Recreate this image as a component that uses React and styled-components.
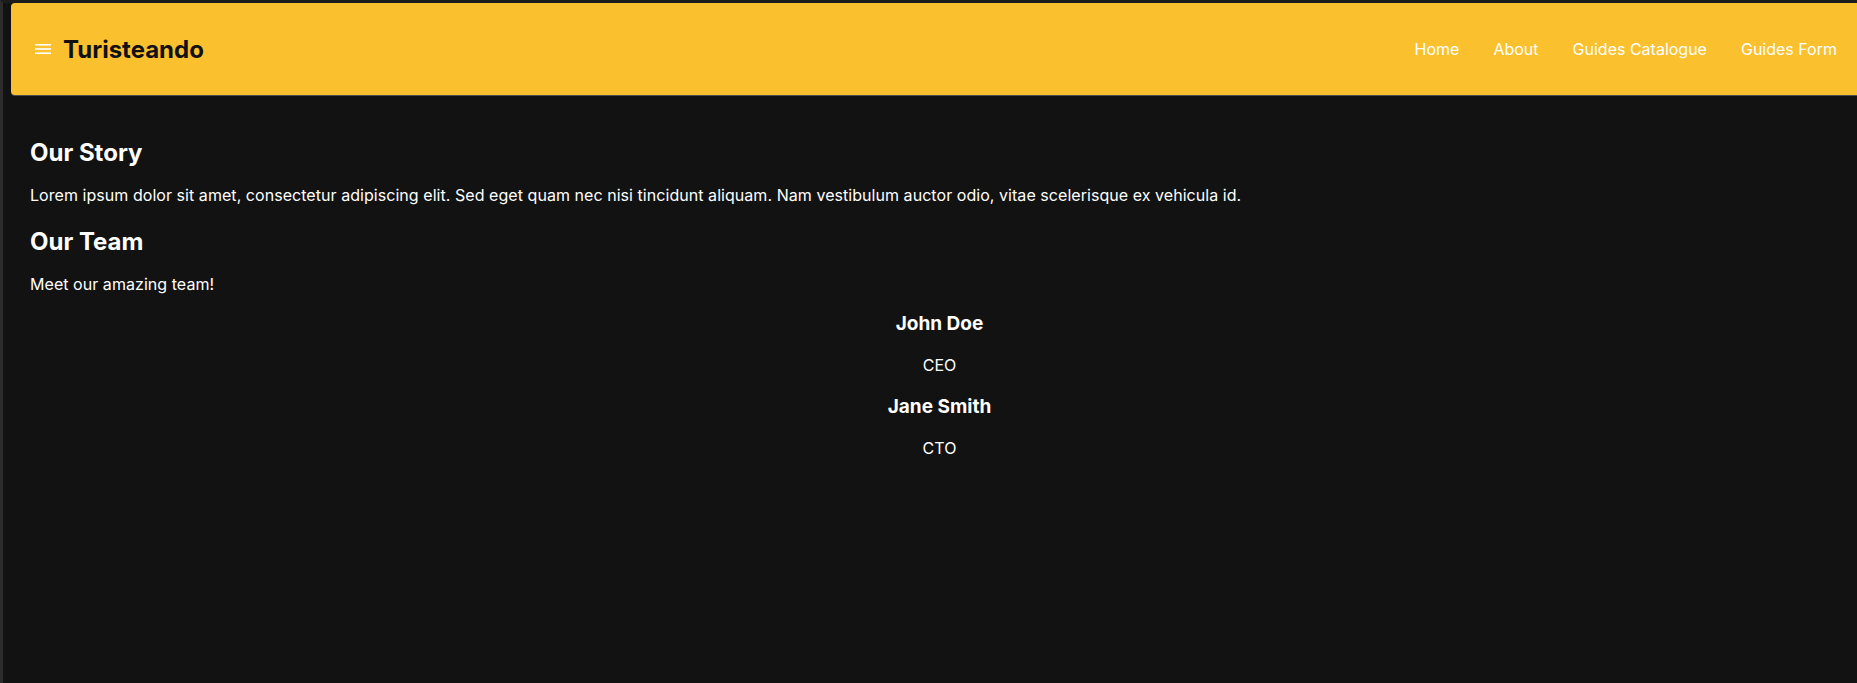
import React from "react";
import styled, { createGlobalStyle } from "styled-components";

const GlobalStyle = createGlobalStyle`
  html, body {
    margin: 0;
    padding: 0;
    background: #121212;
  }
  body {
    font-family: "Inter", "Noto Sans", sans-serif;
    color: #ffffff;
  }
`;

const team = [
  { name: "John Doe", role: "CEO" },
  { name: "Jane Smith", role: "CTO" },
];

const navLinks = ["Home", "About", "Guides Catalogue", "Guides Form"];

const MenuIcon = () => (
  <svg width="16" height="12" viewBox="0 0 16 12" aria-hidden="true">
    <rect x="0" y="1" width="16" height="1.6" fill="#fff" />
    <rect x="0" y="5.2" width="16" height="1.6" fill="#fff" />
    <rect x="0" y="9.4" width="16" height="1.6" fill="#fff" />
  </svg>
);

const App = () => {
  return (
    <Page>
      <GlobalStyle />
      <Header>
        <Brand>
          <MenuIcon />
          <Title>Turisteando</Title>
        </Brand>
        <Nav>
          {navLinks.map((link) => (
            <NavLink key={link}>{link}</NavLink>
          ))}
        </Nav>
      </Header>
      <Main>
        <Heading>Our Story</Heading>
        <Text>
          Lorem ipsum dolor sit amet, consectetur adipiscing elit. Sed eget
          quam nec nisi tincidunt aliquam. Nam vestibulum auctor odio, vitae
          scelerisque ex vehicula id.
        </Text>
        <Heading>Our Team</Heading>
        <Text>Meet our amazing team!</Text>
        <TeamList>
          {team.map((member) => (
            <Member key={member.name}>
              <MemberName>{member.name}</MemberName>
              <MemberRole>{member.role}</MemberRole>
            </Member>
          ))}
        </TeamList>
      </Main>
    </Page>
  );
};

export default App;

const Page = styled.div`
  min-height: 100vh;
  box-sizing: border-box;
  border-left: 3px solid #2c2c2c;
  border-top: 3px solid #1c1c1c;
  background: #121212;
  overflow: hidden;
`;

const Header = styled.header`
  margin-left: 8px;
  height: 92px;
  box-sizing: border-box;
  display: flex;
  align-items: center;
  justify-content: space-between;
  padding: 0 20px 0 24px;
  background: #fbc02d;
  border-radius: 4px 0 0 4px;
  box-shadow: 0 1px 0 #4a4f57;
`;

const Brand = styled.div`
  display: flex;
  align-items: center;
  gap: 12px;
`;

const Title = styled.h1`
  margin: 0;
  font-size: 24px;
  font-weight: 700;
  color: #111111;
`;

const Nav = styled.nav`
  display: flex;
  align-items: center;
  gap: 34px;
`;

const NavLink = styled.a`
  font-size: 16px;
  color: #ffffff;
  cursor: pointer;
`;

const Main = styled.main`
  padding: 23px 8px 0 27px;
`;

const Heading = styled.h2`
  margin: 20px 0 16px;
  font-size: 24px;
  font-weight: 700;
`;

const Text = styled.p`
  margin: 0 0 16px;
  font-size: 16px;
  line-height: 1.5;
  letter-spacing: 0.05px;
`;

const TeamList = styled.div`
  display: flex;
  flex-direction: column;
  align-items: center;
`;

const Member = styled.div`
  display: flex;
  flex-direction: column;
  align-items: center;
`;

const MemberName = styled.h3`
  margin: 0;
  font-size: 19px;
  font-weight: 700;
`;

const MemberRole = styled.p`
  margin: 20px 0 20px;
  font-size: 16px;
`;
